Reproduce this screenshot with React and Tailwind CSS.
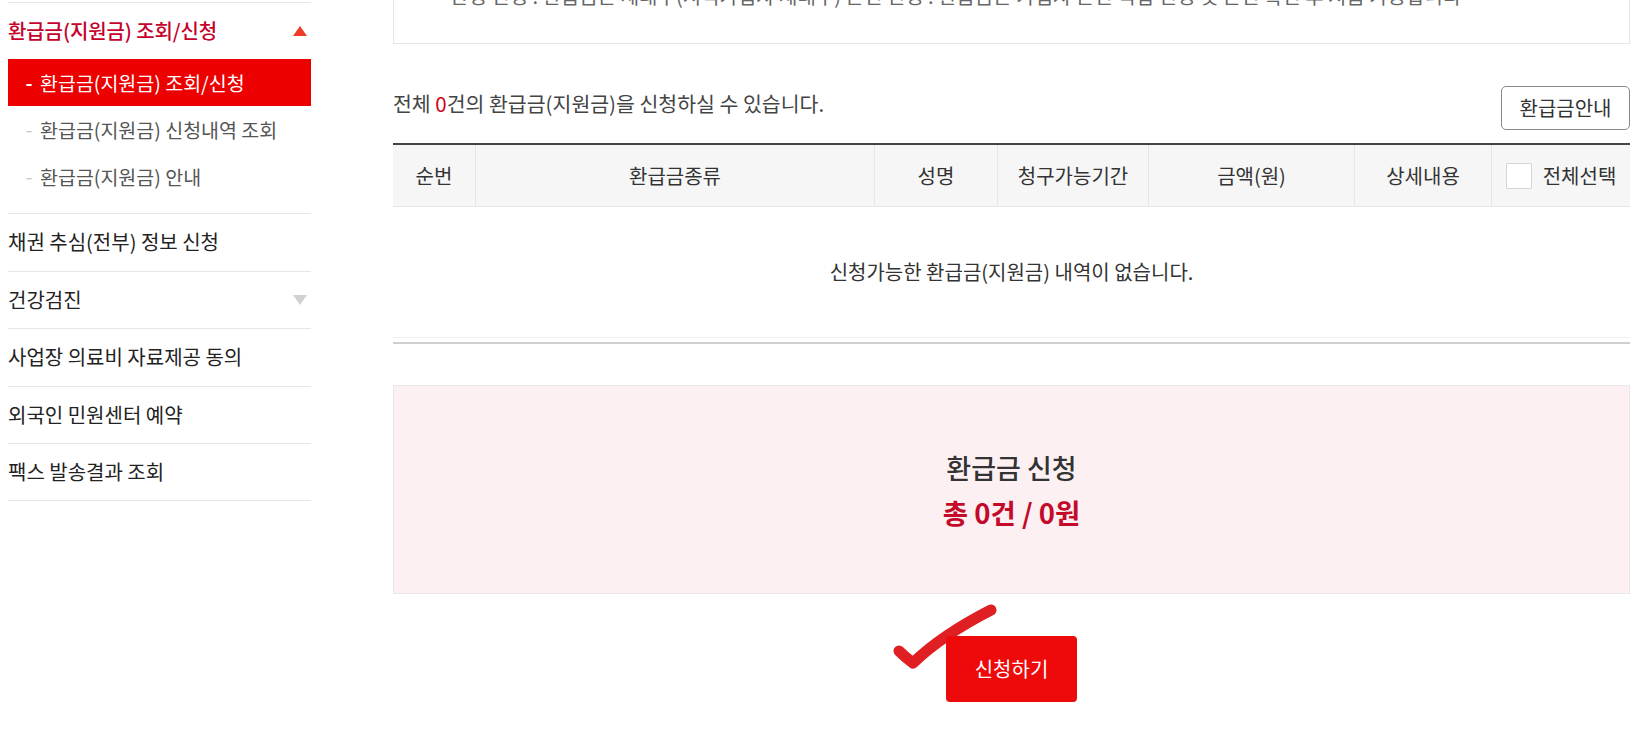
import React from 'react';

const FONT = { fontFamily: '"Noto Sans CJK KR", "Noto Sans", sans-serif' };

const subMenus = [
  { label: '환급금(지원금) 조회/신청', active: true },
  { label: '환급금(지원금) 신청내역 조회' },
  { label: '환급금(지원금) 안내' },
];

const menus = [
  { label: '채권 추심(전부) 정보 신청' },
  { label: '건강검진', arrow: true },
  { label: '사업장 의료비 자료제공 동의' },
  { label: '외국인 민원센터 예약' },
  { label: '팩스 발송결과 조회' },
];

const columns = [
  { label: '순번', w: 'w-[82px]' },
  { label: '환급금종류', w: 'w-[399px]' },
  { label: '성명', w: 'w-[123px]' },
  { label: '청구가능기간', w: 'w-[151px]' },
  { label: '금액(원)', w: 'w-[206px]' },
  { label: '상세내용', w: 'w-[137px]' },
];

// Left navigation
const Sidebar = () => (
  <aside className="ml-2 mt-[2px] w-[303px] shrink-0 border-t border-[#e6e6e6]">
    <div className="flex h-[56px] items-center justify-between">
      <span className="text-[20px] font-medium tracking-[-0.1px] text-[#c4022b]">환급금(지원금) 조회/신청</span>
      <span className="mr-[4px] h-0 w-0 border-x-[7px] border-b-[10px] border-x-transparent border-b-[#f03a2a]" />
    </div>
    <ul className="pb-[13px]">
      {subMenus.map((m) =>
        m.active ? (
          <li key={m.label} className="flex h-[47px] items-center bg-[#ec0000] text-white">
            <span className="w-[32px] pl-[10px] text-center text-[19px] font-bold">-</span>
            <span className="text-[19.5px]">{m.label}</span>
          </li>
        ) : (
          <li key={m.label} className="flex h-[47px] items-center text-[#555]">
            <span className="w-[32px] pl-[10px] text-center text-[19px] text-[#c4c4c4]">-</span>
            <span className="text-[19.5px]">{m.label}</span>
          </li>
        )
      )}
    </ul>
    {menus.map((m) => (
      <div key={m.label} className="flex h-[57.5px] items-center justify-between border-t border-[#e6e6e6] last:border-b">
        <span className="text-[20px] text-[#222]">{m.label}</span>
        {m.arrow && (
          <span className="mr-[4px] h-0 w-0 border-x-[7px] border-t-[10px] border-x-transparent border-t-[#d2d2d2]" />
        )}
      </div>
    ))}
  </aside>
);

const CheckMark = () => (
  <svg
    className="absolute left-[-56px] top-[-34px]"
    width="112"
    height="74"
    viewBox="0 0 112 74"
    fill="none"
  >
    <path
      d="M9 49 Q15 55 23 61 Q52 33 101 8"
      stroke="#e01f22"
      strokeWidth="11"
      strokeLinecap="round"
      strokeLinejoin="round"
    />
  </svg>
);

export default function App() {
  return (
    <div className="flex h-[742px] w-full overflow-hidden bg-white text-[#333]" style={FONT}>
      <Sidebar />

      <main className="ml-[82px] w-[1237px] shrink-0">
        {/* notice box, scrolled mostly out of view */}
        <div className="h-[44px] overflow-hidden border-x border-b border-[#e6e6e6]">
          <p className="mt-[-16px] whitespace-nowrap pl-[56px] text-[20px] leading-[24px] text-[#666]">
            관청 신청 : 환급금은 세대주(지역가입자 세대주) 본인 신청 : 환급금은 가입자 본인 직접 신청 및 본인 확인 후 지급 가능합니다
          </p>
        </div>

        <div className="mt-[42px] flex items-start justify-between">
          <p className="pt-[4px] text-[20.5px] leading-[26px] text-[#444]">
            전체 <span className="text-[#d0021b]">0</span>건의 환급금(지원금)을 신청하실 수 있습니다.
          </p>
          <button className="h-[44px] w-[129px] rounded-[5px] border border-[#8a8a8a] bg-white text-[20px] text-[#333]">
            환급금안내
          </button>
        </div>

        {/* table */}
        <div className="mt-[13px] border-t-2 border-[#444]">
          <div className="flex h-[62px] border-b border-[#e6e6e6] bg-[#f6f6f6]">
            {columns.map((c, i) => (
              <div
                key={c.label}
                className={`${c.w} flex items-center justify-center text-[20px] text-[#333] ${i > 0 ? 'border-l border-[#e6e6e6]' : ''}`}
              >
                {c.label}
              </div>
            ))}
            <div className="flex flex-1 items-center justify-center gap-[11px] border-l border-[#e6e6e6]">
              <span className="h-[26px] w-[26px] border border-[#d6d6d6] bg-white" />
              <span className="text-[20px] text-[#333]">전체선택</span>
            </div>
          </div>
          <div className="flex h-[131px] items-center justify-center border-b border-[#f0f0f0] text-[20px] text-[#333]">
            신청가능한 환급금(지원금) 내역이 없습니다.
          </div>
          <div className="mt-[4px] h-[2px] bg-[#cfcfcf]" />
        </div>

        {/* summary */}
        <div className="mt-[41px] flex h-[209px] flex-col items-center justify-center border border-[#e8e8e8] bg-[#fdf0f2]">
          <p className="text-[27px] font-medium leading-[45px] text-[#333]">환급금 신청</p>
          <p className="text-[27.5px] font-bold leading-[45px] text-[#c40a2a]">총 0건 / 0원</p>
        </div>

        <div className="mt-[42px] flex justify-center">
          <div className="relative">
            <CheckMark />
            <button className="relative z-10 h-[66px] w-[131px] rounded-[4px] bg-[#ee0a0a] text-[20px] text-white">
              신청하기
            </button>
          </div>
        </div>
      </main>
    </div>
  );
}
